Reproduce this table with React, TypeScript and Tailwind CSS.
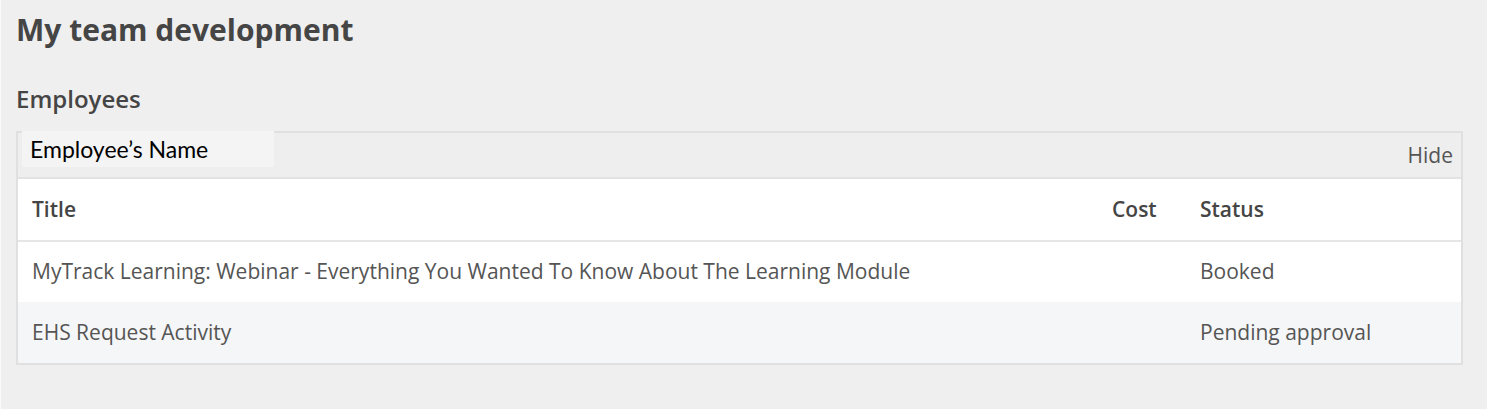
const rows = [
  { title: 'MyTrack Learning: Webinar - Everything You Wanted To Know About The Learning Module', cost: '', status: 'Booked' },
  { title: 'EHS Request Activity', cost: '', status: 'Pending approval' },
]

export default function App() {
  return (
    <div className="min-h-[409px] w-full border-l border-[#fafafa] bg-[#efefef] pl-[15px] pr-6 pt-[10px] font-['Open_Sans',sans-serif] text-[#454545]">
      <h1 className="text-[30px] font-bold leading-[40px]">My team development</h1>

      <h2 className="mt-[33px] text-[24px] font-semibold leading-[32px]">Employees</h2>

      <div className="mt-[16px] border-2 border-[#e0e0e0] bg-white">
        {/* panel header */}
        <div className="flex h-[46px] items-start justify-between border-b-2 border-[#e2e2e2] bg-[#eeeeee] pl-[4px] pr-[8px]">
          <div className="-mt-[2px] flex h-[36px] w-[252px] items-center bg-[#f4f4f4] pl-[8px] font-['Lato',sans-serif] text-[23px] text-black">
            Employee’s Name
          </div>
          <span className="mt-[7px] text-[21px] text-[#555]">Hide</span>
        </div>

        <table className="w-full border-collapse text-[21px]">
          <thead>
            <tr className="h-[62px] border-b-2 border-[#e6e6e6] text-left">
              <th className="pl-[14px] font-semibold">Title</th>
              <th className="w-[88px] font-semibold">Cost</th>
              <th className="w-[261px] font-semibold">Status</th>
            </tr>
          </thead>
          <tbody>
            {rows.map((r, i) => (
              <tr key={i} className={i % 2 ? 'h-[61px] bg-[#f5f6f7]' : 'h-[61px] bg-white'}>
                <td className="pl-[14px] text-[#555]">{r.title}</td>
                <td>{r.cost}</td>
                <td className="text-[#555]">{r.status}</td>
              </tr>
            ))}
          </tbody>
        </table>
      </div>
    </div>
  )
}
